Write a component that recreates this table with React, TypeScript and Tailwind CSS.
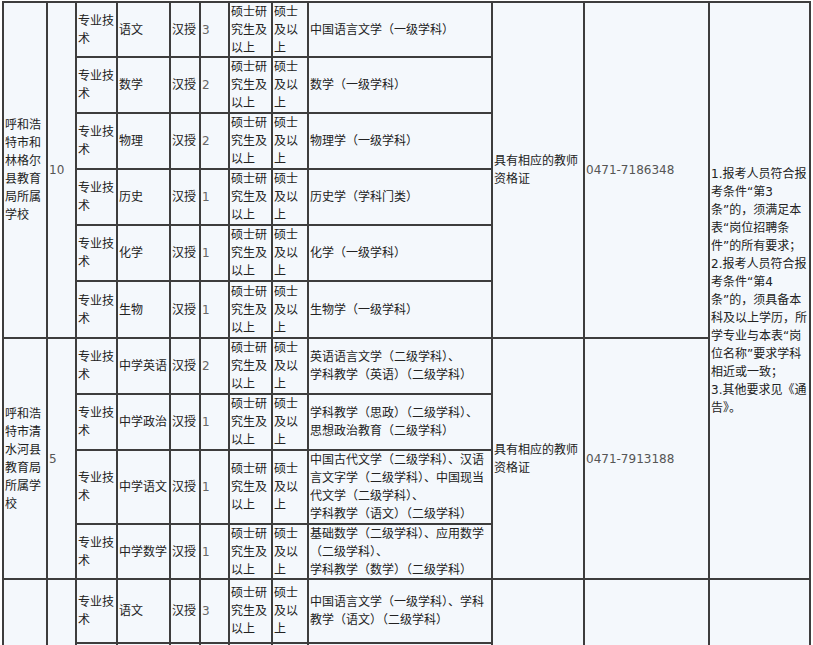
import React from 'react';

type Post = {
  subject: string;
  count: string;
  majors: string[];
};

type Group = {
  unit: string[];
  total: string;
  phone: string;
  rows: Post[];
};

const groups: Group[] = [
  {
    unit: ['呼和浩', '特市和', '林格尔', '县教育', '局所属', '学校'],
    total: '10',
    phone: '0471-7186348',
    rows: [
      { subject: '语文', count: '3', majors: ['中国语言文学（一级学科）'] },
      { subject: '数学', count: '2', majors: ['数学（一级学科）'] },
      { subject: '物理', count: '2', majors: ['物理学（一级学科）'] },
      { subject: '历史', count: '1', majors: ['历史学（学科门类）'] },
      { subject: '化学', count: '1', majors: ['化学（一级学科）'] },
      { subject: '生物', count: '1', majors: ['生物学（一级学科）'] },
    ],
  },
  {
    unit: ['呼和浩', '特市清', '水河县', '教育局', '所属学', '校'],
    total: '5',
    phone: '0471-7913188',
    rows: [
      { subject: '中学英语', count: '2', majors: ['英语语言文学（二级学科）、', '学科教学（英语）（二级学科）'] },
      { subject: '中学政治', count: '1', majors: ['学科教学（思政）（二级学科）、', '思想政治教育（二级学科）'] },
      {
        subject: '中学语文',
        count: '1',
        majors: ['中国古代文学（二级学科）、汉语', '言文字学（二级学科）、中国现当', '代文学（二级学科）、', '学科教学（语文）（二级学科）'],
      },
      {
        subject: '中学数学',
        count: '1',
        majors: ['基础数学（二级学科）、应用数学', '（二级学科）、', '学科教学（数学）（二级学科）'],
      },
    ],
  },
];

const notes = [
  '1.报考人员符合报',
  '考条件“第3',
  '条”的，须满足本',
  '表“岗位招聘条',
  '件”的所有要求；',
  '2.报考人员符合报',
  '考条件“第4',
  '条”的，须具备本',
  '科及以上学历，所',
  '学专业与本表“岗',
  '位名称”要求学科',
  '相近或一致；',
  '3.其他要求见《通',
  '告》。',
];

const Cell: React.FC<{ className?: string; children?: React.ReactNode }> = ({ className = '', children }) => (
  <div className={`bg-[#f4f8fc] px-[1px] flex items-center overflow-hidden ${className}`}>
    <div>{children}</div>
  </div>
);

const Lines: React.FC<{ lines: string[] }> = ({ lines }) => (
  <>
    {lines.map((l, i) => (
      <div key={i} className="whitespace-nowrap">
        {l}
      </div>
    ))}
  </>
);

const PostCells: React.FC<{ post?: Post }> = ({ post }) => (
  <>
    <Cell>{post && '专业技术'}</Cell>
    <Cell className="whitespace-nowrap">{post?.subject}</Cell>
    <Cell>{post && '汉授'}</Cell>
    <Cell className="text-[#666]">{post?.count}</Cell>
    <Cell>{post && '硕士研究生及以上'}</Cell>
    <Cell>{post && '硕士及以上'}</Cell>
    <Cell>{post && <Lines lines={post.majors} />}</Cell>
  </>
);

export default function App() {
  const [g1, g2] = groups;
  const last: Post = { subject: '语文', count: '3', majors: ['中国语言文学（一级学科）、学科', '教学（语文）（二级学科）'] };

  return (
    <div className="h-[645px] w-[813px] overflow-hidden bg-white">
      <div
        className="mt-px ml-[2px] w-[809px] bg-[#3d3d3d] p-[2px] grid gap-[2px] grid-cols-[42px_27px_39px_51px_28px_27px_41px_34px_182px_90px_123px_99px] grid-rows-[53px_54px_54px_54px_54px_55px_54px_54px_72px_53px_62px_60px] text-[12px] leading-[18px] text-[#222]"
        style={{ fontFamily: '"DejaVu Sans", "Noto Sans CJK SC", sans-serif' }}
      >
        {/* group 1 */}
        <Cell className="row-span-6">
          <Lines lines={g1.unit} />
        </Cell>
        <Cell className="row-span-6 text-[#555]">{g1.total}</Cell>
        <PostCells post={g1.rows[0]} />
        <Cell className="row-span-6">具有相应的教师资格证</Cell>
        <Cell className="row-span-6 text-[#555]">{g1.phone}</Cell>
        <Cell className="row-span-10">
          <Lines lines={notes} />
        </Cell>
        {g1.rows.slice(1).map((p) => (
          <PostCells key={p.subject} post={p} />
        ))}

        {/* group 2 */}
        <Cell className="row-span-4">
          <Lines lines={g2.unit} />
        </Cell>
        <Cell className="row-span-4 text-[#555]">{g2.total}</Cell>
        <PostCells post={g2.rows[0]} />
        <Cell className="row-span-4">具有相应的教师资格证</Cell>
        <Cell className="row-span-4 text-[#555]">{g2.phone}</Cell>
        {g2.rows.slice(1).map((p) => (
          <PostCells key={p.subject} post={p} />
        ))}

        {/* group 3, cut off */}
        <Cell className="row-span-2" />
        <Cell className="row-span-2" />
        <PostCells post={last} />
        <Cell className="row-span-2" />
        <Cell className="row-span-2" />
        <Cell className="row-span-2" />
        <PostCells />
      </div>
    </div>
  );
}
